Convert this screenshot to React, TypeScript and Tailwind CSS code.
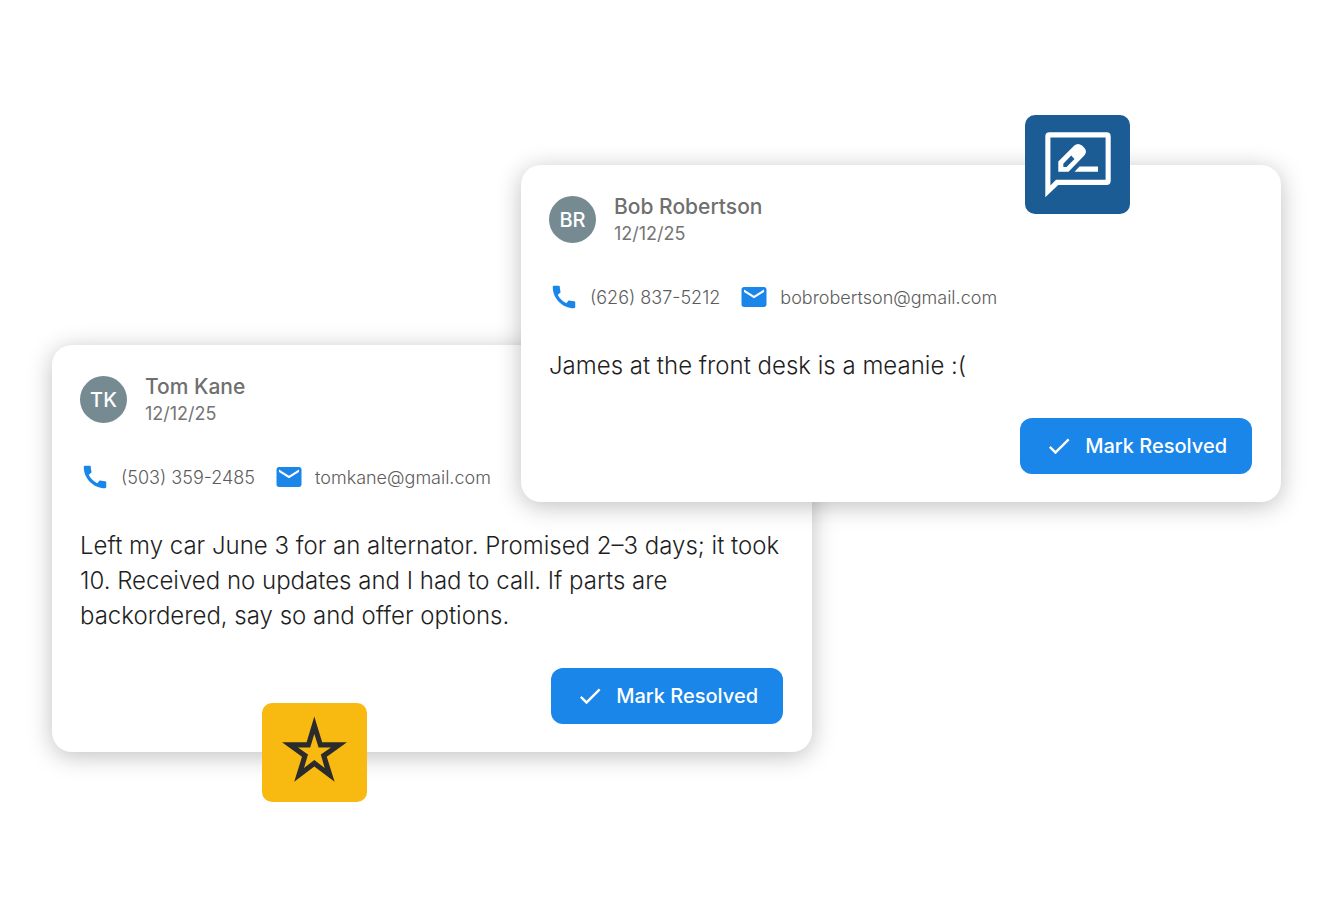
import React from 'react';
import { MdCall, MdCheck, MdEmail } from 'react-icons/md';

interface Feedback {
  name: string;
  initials: string;
  date: string;
  phone: string;
  email: string;
  message: string;
}

const tom: Feedback = {
  name: 'Tom Kane',
  initials: 'TK',
  date: '12/12/25',
  phone: '(503) 359-2485',
  email: 'tomkane@gmail.com',
  message:
    'Left my car June 3 for an alternator. Promised 2–3 days; it took 10. Received no updates and I had to call. If parts are backordered, say so and offer options.',
};

const bob: Feedback = {
  name: 'Bob Robertson',
  initials: 'BR',
  date: '12/12/25',
  phone: '(626) 837-5212',
  email: 'bobrobertson@gmail.com',
  message: 'James at the front desk is a meanie :(',
};

const ReviewIcon = () => (
  <svg viewBox="0 0 105 99" className="w-full" fill="#fff" aria-hidden="true">
    <path
      fillRule="evenodd"
      d="M20.3 82.3V21.5Q20.3 17.3 24.5 17.3H81.5Q85.7 17.3 85.7 21.5V65.8Q85.7 70 81.5 70H33.2ZM25.4 70.6L31 64.8H80.6V22.5H25.4Z"
    />
    <path
      fillRule="evenodd"
      d="M33.3 56.7V46.4L49.3 30.4Q53 27.4 57 30.4L59.3 32.7Q62.7 36.5 59.3 40.5L43.5 56.7ZM38.3 52H41.6L49.5 44L46.2 40.6L38.3 48.7Z"
    />
    <path d="M49.5 56.7L54.5 51.5H73V56.7Z" />
  </svg>
);

const StarIcon = () => (
  <svg viewBox="0 0 105 99" className="w-full" fill="#2b2b2b" aria-hidden="true">
    <path
      fillRule="evenodd"
      d="M52.3 13.5L60.2 39.3H85L64.8 53.8L72.6 78.8L52.3 63.5L32.2 78.8L40 53.8L20 39.3H44.6Z M52.3 31L48.2 44.5H36L46 51.5L42 65L52.3 57L62.7 65L58.8 51.5L69 44.5H56.6Z"
    />
  </svg>
);

const FeedbackCard: React.FC<{ feedback: Feedback }> = ({ feedback }) => (
  <article className="rounded-[20px] bg-white p-7 shadow-[0_4px_24px_rgba(0,0,0,0.25)]">
    <header className="flex items-start gap-[18px]">
      <div className="mt-[3px] flex size-[47px] items-center justify-center rounded-full bg-[#768a92] text-xl font-medium text-white">
        {feedback.initials}
      </div>
      <div>
        <h2 className="text-[21px] leading-[27px] font-medium text-[#6f6f6f]">{feedback.name}</h2>
        <p className="text-[18px] leading-[27px] text-[#757575]">{feedback.date}</p>
      </div>
    </header>

    <div className="mt-[35px] flex items-center text-[18px] font-light text-[#5c5c5c]">
      <a href={`tel:${feedback.phone}`} className="flex items-center gap-[11px]">
        <MdCall className="size-[30px] text-[#1a86e9]" />
        {feedback.phone}
      </a>
      <a href={`mailto:${feedback.email}`} className="ml-[19px] flex items-center gap-[11px]">
        <MdEmail className="size-[30px] text-[#1a86e9]" />
        {feedback.email}
      </a>
    </div>

    <p className="mt-9 text-[24px] leading-[35px] font-light text-[#1f1f1f]">{feedback.message}</p>

    <div className="mt-[35px] flex justify-end pr-px">
      <button className="flex h-14 items-center gap-3 rounded-xl bg-[#1a86e9] px-[25px] text-[20px] font-medium text-white">
        <MdCheck className="size-7" />
        Mark Resolved
      </button>
    </div>
  </article>
);

export default function App() {
  return (
    <main className="grid min-h-screen grid-cols-[1fr_291px_1fr] items-start bg-white pt-[165px] pr-[53px] pb-20 pl-[52px] font-[Inter,sans-serif]">
      <div className="relative col-start-1 col-end-3 row-start-1 mt-[180px]">
        <FeedbackCard feedback={tom} />
        <div className="absolute -bottom-[50px] left-[210px] w-[105px] rounded-[10px] bg-[#f8ba10]">
          <StarIcon />
        </div>
      </div>

      <div className="relative col-start-2 col-end-4 row-start-1">
        <FeedbackCard feedback={bob} />
        <div className="absolute -top-[50px] right-[151px] w-[105px] rounded-[10px] bg-[#1b5c94]">
          <ReviewIcon />
        </div>
      </div>
    </main>
  );
}
